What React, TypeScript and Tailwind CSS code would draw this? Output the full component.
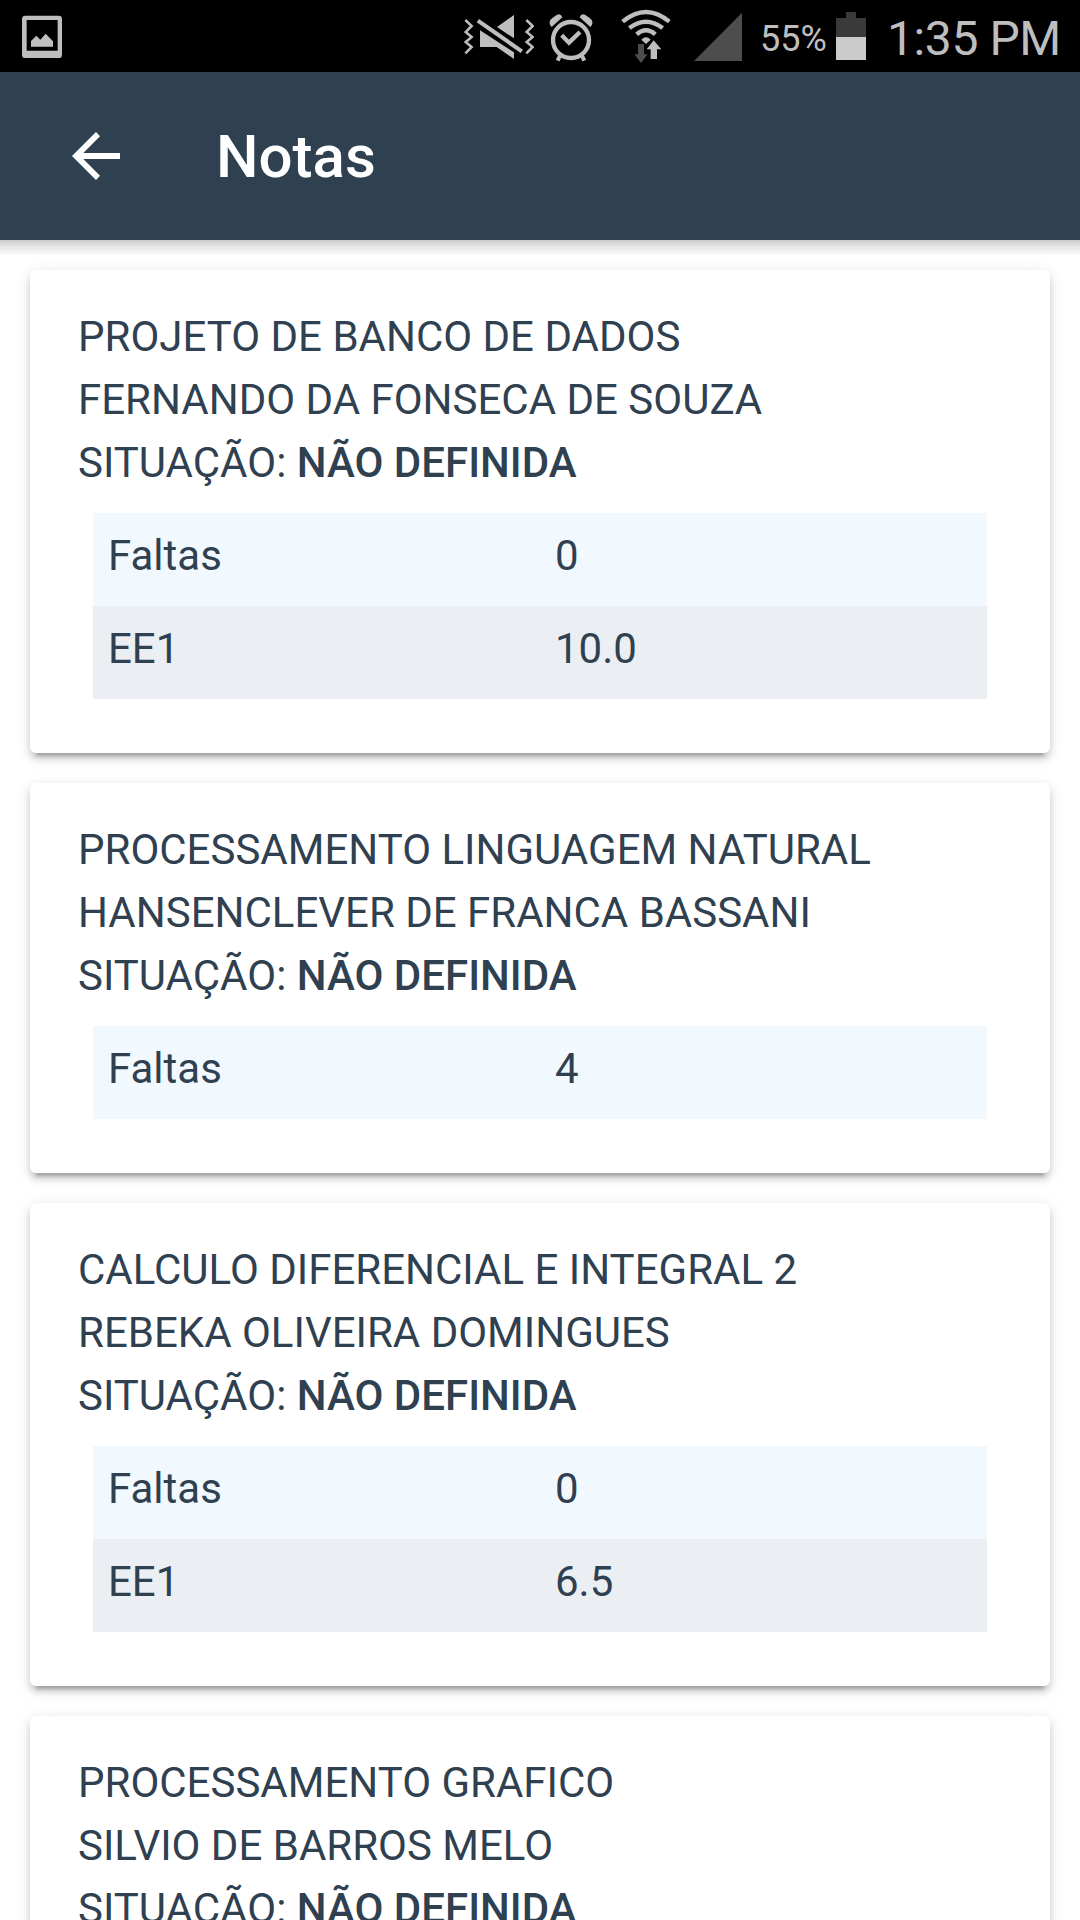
import { ReactNode } from 'react';

interface Grade {
  label: string;
  value: string;
}

interface Course {
  name: string;
  teacher: string;
  status: string;
  grades: Grade[];
}

const courses: Course[] = [
  {
    name: 'PROJETO DE BANCO DE DADOS',
    teacher: 'FERNANDO DA FONSECA DE SOUZA',
    status: 'NÃO DEFINIDA',
    grades: [
      { label: 'Faltas', value: '0' },
      { label: 'EE1', value: '10.0' },
    ],
  },
  {
    name: 'PROCESSAMENTO LINGUAGEM NATURAL',
    teacher: 'HANSENCLEVER DE FRANCA BASSANI',
    status: 'NÃO DEFINIDA',
    grades: [{ label: 'Faltas', value: '4' }],
  },
  {
    name: 'CALCULO DIFERENCIAL E INTEGRAL 2',
    teacher: 'REBEKA OLIVEIRA DOMINGUES',
    status: 'NÃO DEFINIDA',
    grades: [
      { label: 'Faltas', value: '0' },
      { label: 'EE1', value: '6.5' },
    ],
  },
  {
    name: 'PROCESSAMENTO GRAFICO',
    teacher: 'SILVIO DE BARROS MELO',
    status: 'NÃO DEFINIDA',
    grades: [],
  },
];

function PictureIcon() {
  return (
    <svg className="ml-[22px] h-[72px] w-[40px]" viewBox="66 0 120 216">
      <path
        fill="#bebebe"
        fillRule="evenodd"
        d="M76 47h100q10 0 10 10v107q0 10-10 10H76q-10 0-10-10V57q0-10 10-10ZM80 60v92h93V60Z"
      />
      <path fill="#bebebe" d="M93 140v-17l16-16 12 12 16-18 22 23v16Z" />
    </svg>
  );
}

function MuteVibrateIcon() {
  return (
    <svg className="h-[72px] w-[70px]" viewBox="42 0 210 216">
      <g fill="none" stroke="#bebebe" strokeWidth="7.5">
        <path d="M46 60l19 18-18 18 18 15-18 15 18 15-19 19" />
        <path d="M229 60l19 18-18 18 18 15-18 15 18 15-19 19" />
      </g>
      <g fill="#bebebe">
        <path d="M192 45v70l-51-34Z" />
        <path d="M90 91l102 66v20l-52-36H90Z" />
        <path d="M87 57l132 92-7 10L80 67Z" />
      </g>
    </svg>
  );
}

function AlarmIcon() {
  return (
    <svg className="ml-[14px] h-[72px] w-[46px]" viewBox="294 0 138 216">
      <circle cx="363" cy="120" r="54" fill="none" stroke="#bebebe" strokeWidth="13" />
      <path d="M335 106l22 22 33-32" fill="none" stroke="#bebebe" strokeWidth="13" />
      <path
        d="M305 81q-14-16 2-27l13-9q12-6 17 7ZM421 81q14-16-2-27l-13-9q-12-6-17 7Z"
        fill="#bebebe"
      />
      <path d="M331 165l-8 17M395 165l8 17" stroke="#bebebe" strokeWidth="12" />
    </svg>
  );
}

function WifiIcon() {
  return (
    <svg className="ml-[26px] h-[72px] w-[52px]" viewBox="510 0 156 216">
      <g fill="none" stroke="#bebebe" strokeWidth="13">
        <path d="M518 65q70-58 140 0" />
        <path d="M538 84q50-38 100 0" />
        <path d="M560 103q28-24 56 0" />
      </g>
      <path fill="#bebebe" d="M574 119q14-14 28 0l-14 13Z" />
      <path fill="#4d4d4d" d="M564 132h18v31h11l-20 26-20-26h11Z" />
      <path
        fill="#bebebe"
        stroke="#000"
        strokeWidth="4"
        paintOrder="stroke"
        d="M602 177h19v-29h13l-23-27-21 27h12Z"
      />
    </svg>
  );
}

function SignalIcon() {
  return (
    <svg className="ml-[22px] h-[72px] w-[48px]" viewBox="732 0 144 216">
      <path fill="#4d4d4d" d="M876 38v145H732Z" />
    </svg>
  );
}

function BatteryIcon() {
  return (
    <svg className="h-[72px] w-[30px]" viewBox="468 0 90 216">
      <path fill="#3a3a3a" d="M498 36h30v18h30v57h-90V54h30Z" />
      <path fill="#cbcbcb" d="M468 111h90v69h-90Z" />
    </svg>
  );
}

function StatusBar() {
  return (
    <div className="flex h-[72px] shrink-0 items-center bg-black pr-5 text-[#bebebe]">
      <PictureIcon />
      <div className="ml-auto flex items-center">
        <MuteVibrateIcon />
        <AlarmIcon />
        <WifiIcon />
        <SignalIcon />
      </div>
      <span className="ml-[18px] w-[76px] pt-1.5 text-4xl leading-[60px] whitespace-nowrap">55%</span>
      <BatteryIcon />
      <span className="ml-[21px] w-[173px] pt-1.5 text-[48px] leading-[60px] tracking-[-0.4px] whitespace-nowrap">
        1:35 PM
      </span>
    </div>
  );
}

function Toolbar({ title }: { title: string }) {
  return (
    <header className="flex h-[168px] shrink-0 items-center bg-[#2f4050] text-white">
      <button className="ml-[72px] h-12 w-12">
        <svg viewBox="216 396 144 144" className="h-12 w-12" fill="currentColor">
          <path d="M360 459H250l50-50-12-13-72 72 72 72 12-13-50-50h110Z" />
        </svg>
      </button>
      <h1 className="ml-24 pt-0.5 text-[60px] leading-[72px] font-medium">{title}</h1>
    </header>
  );
}

function Line({ children }: { children: ReactNode }) {
  return <p className="leading-[63px] whitespace-nowrap">{children}</p>;
}

function CourseCard({ course }: { course: Course }) {
  return (
    <section className="shrink-0 rounded-md bg-white px-12 pt-[35px] pb-[54px] shadow-[0_6px_6px_0_rgba(0,0,0,0.14),0_9px_3px_-6px_rgba(0,0,0,0.2),0_3px_15px_0_rgba(0,0,0,0.12)]">
      <Line>{course.name}</Line>
      <Line>{course.teacher}</Line>
      <Line>
        SITUAÇÃO: <strong className="font-medium">{course.status}</strong>
      </Line>
      <div className="mx-[15px] mt-[19px]">
        {course.grades.map((grade) => (
          <div
            key={grade.label}
            className="grid h-[93px] grid-cols-2 pt-[11px] leading-[63px] odd:bg-[#f1f9ff] even:bg-[#ebeff4]"
          >
            <span className="pl-[15px]">{grade.label}</span>
            <span className="pl-[15px]">{grade.value}</span>
          </div>
        ))}
      </div>
    </section>
  );
}

export default function App() {
  return (
    <div className="flex h-[1920px] w-[1080px] flex-col overflow-hidden bg-white font-['Roboto',sans-serif] text-[42px] text-[#2f4050]">
      <StatusBar />
      <Toolbar title="Notas" />
      {/* Shadow cast by the toolbar on the content */}
      <div className="h-[15px] shrink-0 bg-linear-to-b from-[#cbcbcb] via-[#e6e6e6] via-45% to-[#fbfbfb]" />
      <main className="flex flex-col gap-[30px] px-[30px] pt-[15px]">
        {courses.map((course) => (
          <CourseCard key={course.name} course={course} />
        ))}
      </main>
    </div>
  );
}
